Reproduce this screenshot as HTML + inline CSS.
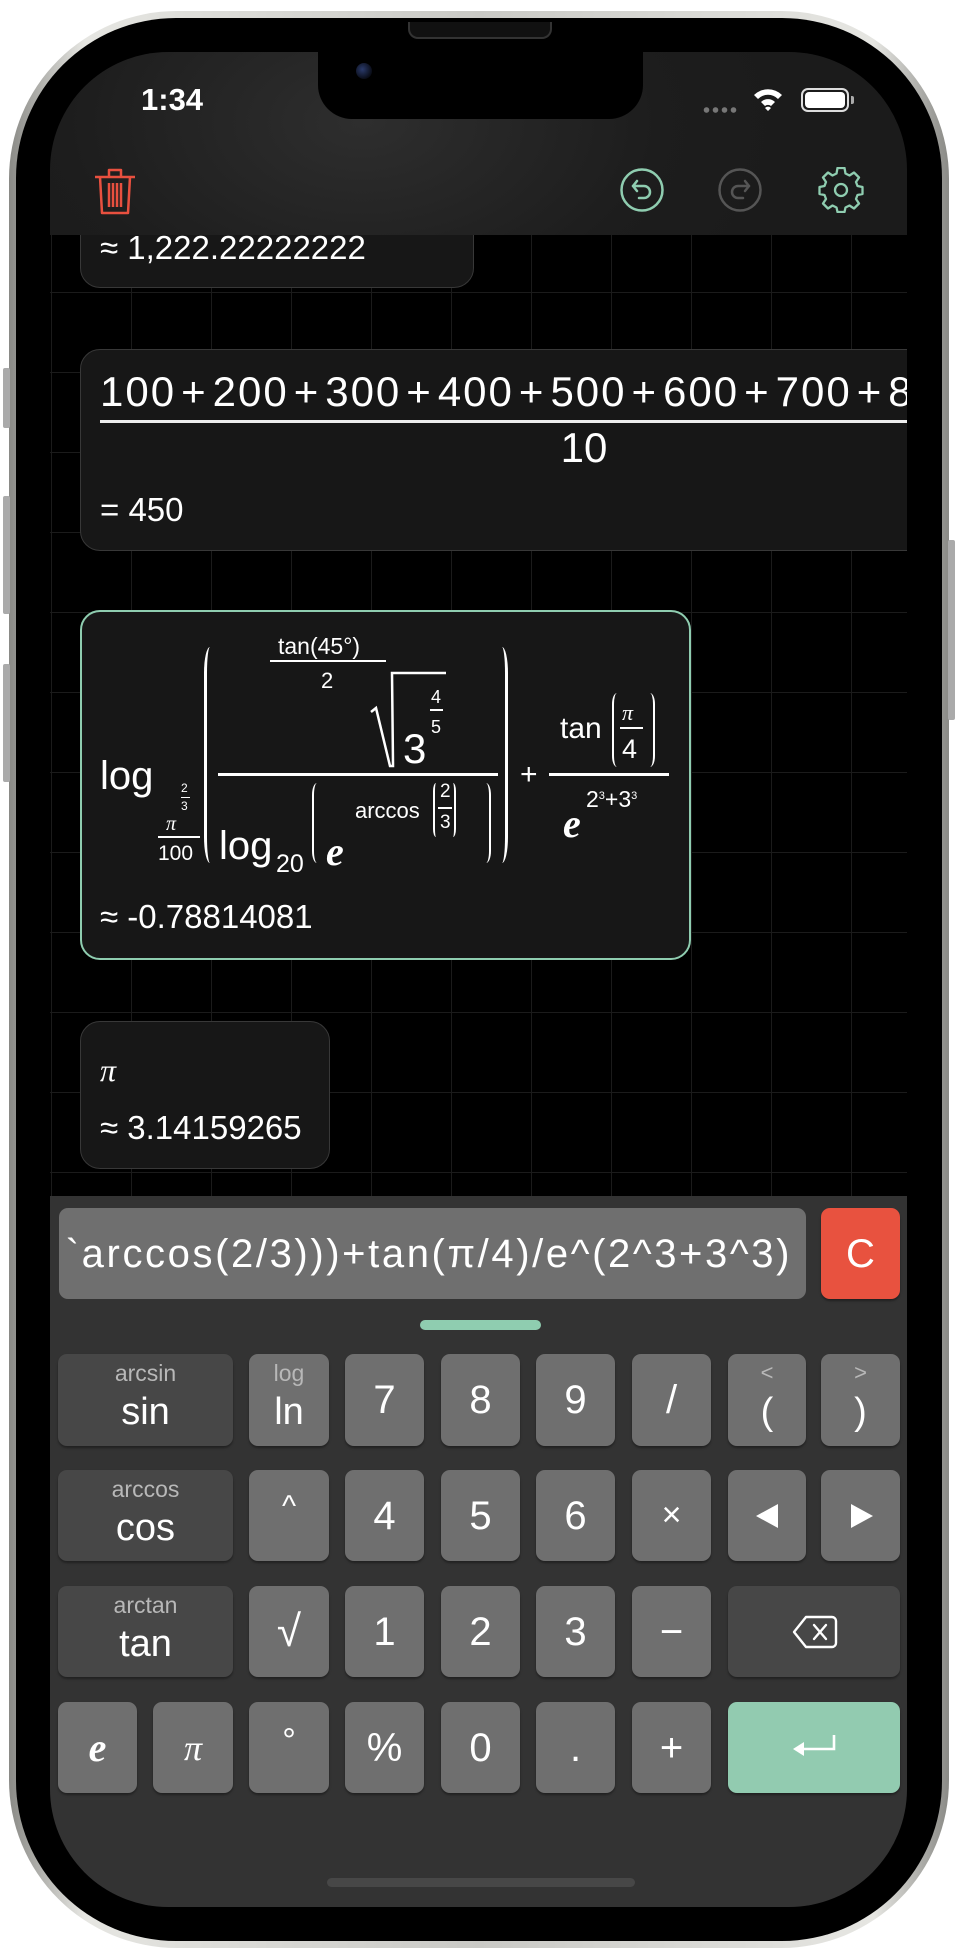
<!DOCTYPE html>
<html><head><meta charset="utf-8"><style>
*{margin:0;padding:0;box-sizing:border-box}
body{width:958px;height:1954px;background:#fff;position:relative;overflow:hidden;font-family:"Liberation Sans",sans-serif;color:#fff}
.a{position:absolute}
.frame{left:9px;top:11px;width:940px;height:1937px;border-radius:168px;background:linear-gradient(90deg,#8a8a86,#e6e6e2 8%,#c9c9c5 50%,#e6e6e2 92%,#8a8a86);}
.inner{left:16px;top:18px;width:926px;height:1923px;border-radius:160px;background:#000}
.scr{left:0;top:0;width:958px;height:1954px;clip-path:inset(52px 51px 47px 50px round 118px);background:#000}
.grid{left:50px;top:235px;width:860px;height:965px;background-color:#000;background-image:linear-gradient(90deg,#1b1b1b 1px,transparent 1px),linear-gradient(#1b1b1b 1px,transparent 1px);background-size:80px 80px;background-position:81px 57px}
.card{background:#171717;border:1.5px solid #383838;border-radius:20px}
.t{white-space:nowrap;line-height:1}
.hdr{left:50px;top:52px;width:860px;height:183px;background:radial-gradient(ellipse 420px 260px at 312px 70px,#2e2e2e,#1d1d1d 70%,#1b1b1b)}
.kb{left:50px;top:1196px;width:860px;height:720px;background:#333}
.k{position:absolute;border-radius:9px;background:#6f6f6f;box-shadow:0 2px 2px rgba(0,0,0,.35)}
.k.d{background:#474747}
.k .m{position:absolute;left:0;right:0;text-align:center;line-height:1;white-space:nowrap}
.ser{font-family:"Liberation Serif",serif}
.p{margin:0 5px}
</style></head><body>
<div class="a frame"></div>
<div class="a inner"></div>
<div class="a" style="left:408px;top:22px;width:144px;height:17px;border-radius:0 0 10px 10px;background:#111;border:2px solid #333;border-top:none"></div>
<div class="a" style="left:3px;top:368px;width:7px;height:60px;background:#aaa;border-radius:2px"></div>
<div class="a" style="left:3px;top:496px;width:7px;height:118px;background:#aaa;border-radius:2px"></div>
<div class="a" style="left:3px;top:664px;width:7px;height:118px;background:#aaa;border-radius:2px"></div>
<div class="a" style="left:948px;top:540px;width:7px;height:180px;background:#aaa;border-radius:2px"></div>

<div class="a scr">
  <div class="a grid"></div>

  <div class="a card" style="left:80px;top:150px;width:394px;height:138px"></div>
  <div class="a t" style="left:100px;top:231px;font-size:33px">≈ 1,222.22222222</div>

  <div class="a card" style="left:80px;top:349px;width:900px;height:202px"></div>
  <div class="a t" style="left:100px;top:371px;font-size:42px;letter-spacing:2px">100<span class="p">+</span>200<span class="p">+</span>300<span class="p">+</span>400<span class="p">+</span>500<span class="p">+</span>600<span class="p">+</span>700<span class="p">+</span>800</div>
  <div class="a" style="left:100px;top:420px;width:820px;height:3px;background:#eee"></div>
  <div class="a t" style="left:540px;top:427px;width:88px;text-align:center;font-size:42px">10</div>
  <div class="a t" style="left:100px;top:493px;font-size:33px">= 450</div>

  <div class="a card" style="left:80px;top:610px;width:611px;height:350px;border:2px solid #8fcdb0"></div>
  <div class="a t" style="left:100px;top:756px;font-size:40px">log</div>
  <div class="a t" style="left:181px;top:782px;font-size:12px">2</div>
  <div class="a" style="left:181px;top:797px;width:9px;height:1px;background:#fff"></div>
  <div class="a t" style="left:181px;top:800px;font-size:12px">3</div>
  <div class="a t ser" style="left:166px;top:814px;font-size:20px;font-style:italic">π</div>
  <div class="a" style="left:158px;top:836px;width:42px;height:2px;background:#fff"></div>
  <div class="a t" style="left:158px;top:843px;font-size:21px">100</div>
  <div class="a" style="left:204px;top:647px;width:12px;height:216px;border-left:3px solid #fff;border-radius:50%/12%"></div>
  <div class="a" style="left:496px;top:647px;width:12px;height:216px;border-right:3px solid #fff;border-radius:50%/12%"></div>
  <div class="a t" style="left:278px;top:635px;font-size:23px">tan(45°)</div>
  <div class="a" style="left:270px;top:660px;width:116px;height:2px;background:#fff"></div>
  <div class="a t" style="left:321px;top:670px;font-size:22px">2</div>
  <svg class="a" style="left:368px;top:670px" width="80" height="100"><path d="M3 42 L8 38 L22 96 L25 96 L25 93 L24 3 L78 3" fill="none" stroke="#fff" stroke-width="2.5"/></svg>
  <div class="a t" style="left:403px;top:728px;font-size:42px">3</div>
  <div class="a t" style="left:431px;top:688px;font-size:18px">4</div>
  <div class="a" style="left:430px;top:709px;width:13px;height:1.5px;background:#fff"></div>
  <div class="a t" style="left:431px;top:718px;font-size:18px">5</div>
  <div class="a" style="left:218px;top:773px;width:280px;height:3px;background:#fff"></div>
  <div class="a t" style="left:219px;top:826px;font-size:40px">log</div>
  <div class="a t" style="left:276px;top:852px;font-size:25px">20</div>
  <div class="a" style="left:312px;top:783px;width:10px;height:80px;border-left:2.5px solid #fff;border-radius:50%/15%"></div>
  <div class="a t ser" style="left:326px;top:832px;font-size:40px;font-style:italic;font-weight:bold">e</div>
  <div class="a t" style="left:355px;top:800px;font-size:22px">arccos</div>
  <div class="a" style="left:433px;top:783px;width:6px;height:54px;border-left:2px solid #fff;border-radius:50%/15%"></div>
  <div class="a t" style="left:440px;top:782px;font-size:19px">2</div>
  <div class="a" style="left:438px;top:807px;width:14px;height:1.5px;background:#fff"></div>
  <div class="a t" style="left:440px;top:813px;font-size:19px">3</div>
  <div class="a" style="left:450px;top:783px;width:6px;height:54px;border-right:2px solid #fff;border-radius:50%/15%"></div>
  <div class="a" style="left:481px;top:783px;width:10px;height:80px;border-right:2.5px solid #fff;border-radius:50%/15%"></div>
  <div class="a t" style="left:520px;top:760px;font-size:30px">+</div>
  <div class="a t" style="left:560px;top:714px;font-size:30px">tan</div>
  <div class="a" style="left:612px;top:693px;width:10px;height:74px;border-left:2.5px solid #fff;border-radius:50%/15%"></div>
  <div class="a t ser" style="left:622px;top:702px;font-size:22px;font-style:italic">π</div>
  <div class="a" style="left:620px;top:727px;width:23px;height:2px;background:#fff"></div>
  <div class="a t" style="left:622px;top:736px;font-size:27px">4</div>
  <div class="a" style="left:645px;top:693px;width:10px;height:74px;border-right:2.5px solid #fff;border-radius:50%/15%"></div>
  <div class="a" style="left:549px;top:773px;width:120px;height:3px;background:#fff"></div>
  <div class="a t ser" style="left:563px;top:804px;font-size:40px;font-style:italic;font-weight:bold">e</div>
  <div class="a t" style="left:586px;top:788px;font-size:23px">2<sup style="font-size:11px;vertical-align:8px">3</sup>+3<sup style="font-size:11px;vertical-align:8px">3</sup></div>
  <div class="a t" style="left:100px;top:900px;font-size:33px">≈ -0.78814081</div>

  <div class="a card" style="left:80px;top:1021px;width:250px;height:148px"></div>
  <div class="a t ser" style="left:100px;top:1054px;font-size:32px;font-style:italic">π</div>
  <div class="a t" style="left:100px;top:1111px;font-size:33px">≈ 3.14159265</div>

  <div class="a hdr"></div>
  <div class="a" style="left:318px;top:40px;width:325px;height:79px;background:#000;border-radius:0 0 34px 34px"></div>
  <div class="a" style="left:356px;top:63px;width:16px;height:16px;border-radius:50%;background:radial-gradient(circle at 40% 40%,#2a3a6a,#0a0d18 70%)"></div>
  <div class="a t" style="left:141px;top:84px;font-size:31px;font-weight:bold">1:34</div>
  <div class="a" style="left:702px;top:107px;width:36px;height:6px;background-image:radial-gradient(circle,#777 2.5px,transparent 3px);background-size:9px 6px"></div>
  <svg class="a" style="left:752px;top:86px" width="32" height="26" viewBox="0 0 32 26"><path d="M2 9 A20 20 0 0 1 30 9 L26 13 A14 14 0 0 0 6 13 Z M9 16 A10 10 0 0 1 23 16 L19 20 A4.5 4.5 0 0 0 13 20 Z M16 25 L13 22 A4 4 0 0 1 19 22 Z" fill="#fff"/></svg>
  <div class="a" style="left:801px;top:88px;width:48px;height:24px;border:2.5px solid #ddd;border-radius:7px"></div>
  <div class="a" style="left:805px;top:92px;width:40px;height:16px;background:#fff;border-radius:4px"></div>
  <div class="a" style="left:851px;top:96px;width:3px;height:8px;background:#aaa;border-radius:0 2px 2px 0"></div>
  <svg class="a" style="left:92px;top:166px" width="46" height="50" viewBox="0 0 46 50"><g fill="none" stroke="#e8503f" stroke-width="2.5" stroke-linejoin="round"><path d="M3 11 H43"/><path d="M17 11 V4 H29 V11"/><path d="M8 11 L10 47 H36 L38 11"/><path d="M17 17 V41 M21 17 V41 M25 17 V41 M29 17 V41"/></g></svg>
  <svg class="a" style="left:618px;top:166px" width="48" height="48" viewBox="0 0 48 48"><g fill="none" stroke="#8fcdb0" stroke-width="2.5" stroke-linecap="round" stroke-linejoin="round"><circle cx="24" cy="24" r="20.5"/><path d="M19 15 L15 20 L19 25"/><path d="M15 20 H26 A6 6 0 0 1 26 32 H21"/></g></svg>
  <svg class="a" style="left:716px;top:166px" width="48" height="48" viewBox="0 0 48 48"><g fill="none" stroke="#555" stroke-width="2.5" stroke-linecap="round" stroke-linejoin="round"><circle cx="24" cy="24" r="20.5"/><path d="M29 15 L33 20 L29 25"/><path d="M33 20 H22 A6 6 0 0 0 22 32 H27"/></g></svg>
  <svg class="a" style="left:818px;top:167px" width="46" height="46" viewBox="-23 -23 46 46"><g fill="none" stroke="#8fcdb0" stroke-width="2.3" stroke-linejoin="round"><path d="M-3.5 -20 H3.5 L4.5 -14.5 L8.5 -12.5 L13 -15.5 L18 -10.5 L15 -6 L16.5 -2 L21.5 -1 V6 L16.5 7 L15 11 L18 15.5 L13 20.5 L8.5 17.5 L4.5 19.5 L3.5 24 H-3.5 L-4.5 19.5 L-8.5 17.5 L-13 20.5 L-18 15.5 L-15 11 L-16.5 7 L-21.5 6 V-1 L-16.5 -2 L-15 -6 L-18 -10.5 L-13 -15.5 L-8.5 -12.5 L-4.5 -14.5 Z" transform="translate(0,-2)"/><circle cx="0" cy="0" r="6"/></g></svg>

  <div class="a kb"></div>
  <div class="a" style="left:59px;top:1208px;width:747px;height:91px;background:#6f6f6f;border-radius:9px;overflow:hidden;display:flex;justify-content:flex-end;align-items:center;padding-right:14px"><span class="t" style="font-size:40px;letter-spacing:2.6px">`arccos(2/3)))+tan(π/4)/e^(2^3+3^3)</span></div>
  <div class="k" style="left:821px;top:1208px;width:79px;height:91px;background:#e8523f"><div class="m" style="top:26px;font-size:40px">C</div></div>
  <div class="a" style="left:420px;top:1320px;width:121px;height:10px;border-radius:5px;background:#8fcdb0"></div>

  <div class="k d" style="left:58px;top:1354px;width:175px;height:92px"><div class="m" style="top:8px;font-size:23px;color:#b8b8b8">arcsin</div><div class="m" style="top:39px;font-size:38px">sin</div></div>
  <div class="k" style="left:249px;top:1354px;width:80px;height:92px"><div class="m" style="top:8px;font-size:23px;color:#b8b8b8">log</div><div class="m" style="top:39px;font-size:38px">ln</div></div>
  <div class="k" style="left:345px;top:1354px;width:79px;height:92px"><div class="m" style="top:26px;font-size:40px">7</div></div>
  <div class="k" style="left:441px;top:1354px;width:79px;height:92px"><div class="m" style="top:26px;font-size:40px">8</div></div>
  <div class="k" style="left:536px;top:1354px;width:79px;height:92px"><div class="m" style="top:26px;font-size:40px">9</div></div>
  <div class="k" style="left:632px;top:1354px;width:79px;height:92px"><div class="m" style="top:26px;font-size:40px">/</div></div>
  <div class="k" style="left:728px;top:1354px;width:78px;height:92px"><div class="m" style="top:8px;font-size:22px;color:#b8b8b8">&lt;</div><div class="m" style="top:39px;font-size:38px">(</div></div>
  <div class="k" style="left:821px;top:1354px;width:79px;height:92px"><div class="m" style="top:8px;font-size:22px;color:#b8b8b8">&gt;</div><div class="m" style="top:39px;font-size:38px">)</div></div>
  <div class="k d" style="left:58px;top:1470px;width:175px;height:91px"><div class="m" style="top:8px;font-size:23px;color:#b8b8b8">arccos</div><div class="m" style="top:39px;font-size:38px">cos</div></div>
  <div class="k" style="left:249px;top:1470px;width:80px;height:91px"><div class="m" style="top:22px;font-size:30px">^</div></div>
  <div class="k" style="left:345px;top:1470px;width:79px;height:91px"><div class="m" style="top:26px;font-size:40px">4</div></div>
  <div class="k" style="left:441px;top:1470px;width:79px;height:91px"><div class="m" style="top:26px;font-size:40px">5</div></div>
  <div class="k" style="left:536px;top:1470px;width:79px;height:91px"><div class="m" style="top:26px;font-size:40px">6</div></div>
  <div class="k" style="left:632px;top:1470px;width:79px;height:91px"><div class="m" style="top:28px;font-size:34px">×</div></div>
  <div class="k" style="left:728px;top:1470px;width:78px;height:91px"><svg class="a" style="left:26px;top:33px" width="26" height="26"><path d="M2 13 L24 1 V25 Z" fill="#fff"/></svg></div>
  <div class="k" style="left:821px;top:1470px;width:79px;height:91px"><svg class="a" style="left:28px;top:33px" width="26" height="26"><path d="M24 13 L2 1 V25 Z" fill="#fff"/></svg></div>
  <div class="k d" style="left:58px;top:1586px;width:175px;height:91px"><div class="m" style="top:8px;font-size:23px;color:#b8b8b8">arctan</div><div class="m" style="top:39px;font-size:38px">tan</div></div>
  <div class="k" style="left:249px;top:1586px;width:80px;height:91px"><div class="m" style="top:24px;font-size:44px">√</div></div>
  <div class="k" style="left:345px;top:1586px;width:79px;height:91px"><div class="m" style="top:26px;font-size:40px">1</div></div>
  <div class="k" style="left:441px;top:1586px;width:79px;height:91px"><div class="m" style="top:26px;font-size:40px">2</div></div>
  <div class="k" style="left:536px;top:1586px;width:79px;height:91px"><div class="m" style="top:26px;font-size:40px">3</div></div>
  <div class="k" style="left:632px;top:1586px;width:79px;height:91px"><div class="m" style="top:26px;font-size:40px">−</div></div>
  <div class="k d" style="left:728px;top:1586px;width:172px;height:91px"><svg class="a" style="left:64px;top:28px" width="46" height="36" viewBox="0 0 46 36"><g fill="none" stroke="#fff" stroke-width="2.4" stroke-linejoin="round" stroke-linecap="round"><path d="M14 3 H40 A4 4 0 0 1 44 7 V29 A4 4 0 0 1 40 33 H14 L2 18 Z"/><path d="M22 11 L34 25 M34 11 L22 25"/></g></svg></div>
  <div class="k" style="left:58px;top:1702px;width:79px;height:91px"><div class="m ser" style="top:26px;font-size:40px;font-style:italic;font-weight:bold">e</div></div>
  <div class="k" style="left:153px;top:1702px;width:80px;height:91px"><div class="m ser" style="top:28px;font-size:36px;font-style:italic">π</div></div>
  <div class="k" style="left:249px;top:1702px;width:80px;height:91px"><div class="m" style="top:22px;font-size:34px">°</div></div>
  <div class="k" style="left:345px;top:1702px;width:79px;height:91px"><div class="m" style="top:26px;font-size:40px">%</div></div>
  <div class="k" style="left:441px;top:1702px;width:79px;height:91px"><div class="m" style="top:26px;font-size:40px">0</div></div>
  <div class="k" style="left:536px;top:1702px;width:79px;height:91px"><div class="m" style="top:26px;font-size:40px">.</div></div>
  <div class="k" style="left:632px;top:1702px;width:79px;height:91px"><div class="m" style="top:26px;font-size:40px">+</div></div>
  <div class="k" style="left:728px;top:1702px;width:172px;height:91px;background:#92cbb0"><svg class="a" style="left:62px;top:30px" width="48" height="30" viewBox="0 0 48 30"><path d="M44 3 V17 H12" fill="none" stroke="#fff" stroke-width="2.6"/><path d="M3 17 L14 10 V24 Z" fill="#fff"/></svg></div>
  <div class="a" style="left:327px;top:1878px;width:308px;height:9px;border-radius:5px;background:#474747"></div>
</div>
</body></html>
